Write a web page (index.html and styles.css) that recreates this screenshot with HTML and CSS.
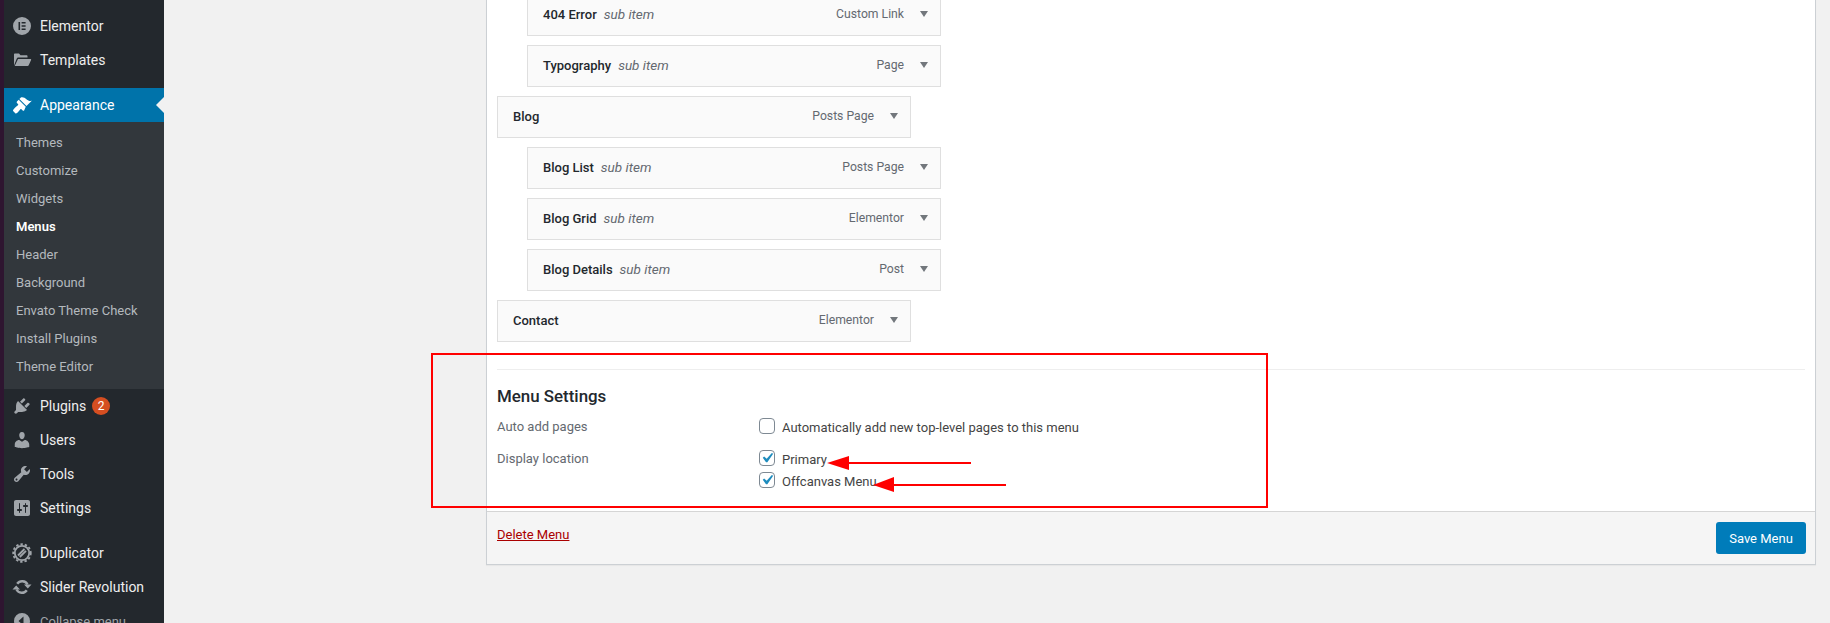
FILE: index.html
```html
<!DOCTYPE html>
<html lang="en">
<head>
<meta charset="utf-8">
<title>Menus</title>
<link rel="stylesheet" href="styles.css">
</head>
<body>
<div class="page">
  <nav class="sidebar">
    <ul class="nav-group">
      <li class="nav-item"><svg class="nav-icon" viewBox="0 0 20 20"><path fill-rule="evenodd" d="M10 1a9 9 0 1 1 0 18a9 9 0 0 1 0-18zM6.500 6v8h1.600V6zM9.600 6v1.600h4V6zM9.600 9.200v1.600h4V9.200zM9.600 12.400v1.600h4v-1.600z"/></svg><span>Elementor</span></li>
      <li class="nav-item"><svg class="nav-icon" viewBox="0 0 20 20"><path d="M2 15.500V4.500c0-.6.400-1 1-1h4l1.500 1.700h6c.6 0 1 .4 1 1v1.300H6.500c-.9 0-1.400.4-1.700 1.100zM6 9h12.500c.5 0 .8.400.6.900l-2.400 5.400c-.2.400-.6.700-1.100.7H2.700z"/></svg><span>Templates</span></li>
    </ul>
    <div class="nav-section">
      <div class="nav-item nav-current"><svg class="nav-icon" viewBox="0 0 20 20"><path d="M14.480 11.060L7.410 3.990l1.500-1.500c.5-.56 2.300-.47 3.510.32 1.210.8 1.430 1.280 2.910 2.100 1.180.64 2.450 1.260 4.450.85zm-.71.71L6.700 4.700 4.930 6.470c-.39.39-.39 1.020 0 1.410l1.060 1.060c.39.39.39 1.030 0 1.420-.6.6-1.430 1.110-2.210 1.690-.35.26-.7.53-1.010.84-1.340 1.340-2.050 2.500-1.640 3.090.6.860 1.700 1.700 2.400 2.400.6.400 1.900-.500 3-1.900.500-.600 1.100-1.500 1.700-2.100.36-.4 1.020-.39 1.420 0l1.060 1.060c.39.39 1.020.39 1.410 0z"/></svg><span>Appearance</span></div>
      <ul class="submenu">
        <li>Themes</li>
        <li>Customize</li>
        <li>Widgets</li>
        <li class="sub-current">Menus</li>
        <li>Header</li>
        <li>Background</li>
        <li>Envato Theme Check</li>
        <li>Install Plugins</li>
        <li>Theme Editor</li>
      </ul>
    </div>
    <ul class="nav-group">
      <li class="nav-item"><svg class="nav-icon" viewBox="0 0 20 20"><path d="M13.110 4.360L9.870 7.600 8 5.730l3.240-3.240c.35-.34 1.050-.2 1.560.32.52.51.66 1.210.31 1.550zm-8 1.770l.91-1.120 9.010 9.010-1.190.84c-.71.71-2.630 1.160-3.820 1.160H6.140L4.900 17.260c-.59.59-1.540.59-2.120 0-.59-.58-.59-1.530 0-2.120l1.240-1.240v-3.880c0-1.130.4-3.190 1.090-3.890zm7.260 3.970l3.240-3.240c.34-.35 1.040-.21 1.550.31.52.51.66 1.210.31 1.550l-3.240 3.250z"/></svg><span>Plugins</span><span class="badge">2</span></li>
      <li class="nav-item"><svg class="nav-icon" viewBox="0 0 20 20"><path d="M10 9.250c-2.270 0-2.730-3.440-2.730-3.440C7 4.020 7.820 2 9.970 2c2.160 0 2.980 2.020 2.710 3.810 0 0-.41 3.440-2.680 3.440zm0 2.570L12.720 10c2.390 0 4.520 2.330 4.520 4.530v2.490s-3.650 1.130-7.240 1.130c-3.650 0-7.240-1.130-7.240-1.130v-2.490c0-2.250 1.940-4.480 4.470-4.480z"/></svg><span>Users</span></li>
      <li class="nav-item"><svg class="nav-icon" viewBox="0 0 20 20"><path d="M16.680 9.770c-1.340 1.340-3.300 1.670-4.950.99l-5.410 6.520c-.99.99-2.590.99-3.580 0s-.99-2.590 0-3.570l6.520-5.420c-.68-1.650-.35-3.610.99-4.950 1.280-1.280 3.120-1.620 4.720-1.060l-2.890 2.890 2.820 2.820 2.860-2.870c.53 1.580.18 3.390-1.080 4.650zM3.810 16.210c.4.39 1.040.39 1.430 0 .4-.4.4-1.040 0-1.430-.39-.4-1.030-.4-1.430 0-.39.39-.39 1.030 0 1.430z"/></svg><span>Tools</span></li>
      <li class="nav-item"><svg class="nav-icon" viewBox="0 0 20 20"><path d="M18 16V4c0-1.100-.9-2-2-2H4c-1.100 0-2 .9-2 2v12c0 1.100.9 2 2 2h12c1.100 0 2-.9 2-2zM8 11h1c.55 0 1 .45 1 1s-.45 1-1 1H8v1.500c0 .28-.22.5-.5.5s-.5-.22-.5-.5V13H6c-.55 0-1-.45-1-1s.45-1 1-1h1V5.500c0-.28.22-.5.5-.5s.5.22.5.5V11zm5-2h-1c-.55 0-1-.45-1-1s.45-1 1-1h1V5.500c0-.28.22-.5.5-.5s.5.22.5.5V7h1c.55 0 1 .45 1 1s-.45 1-1 1h-1v5.500c0 .28-.22.5-.5.5s-.5-.22-.5-.5V9z"/></svg><span>Settings</span></li>
    </ul>
    <ul class="nav-group nav-gap">
      <li class="nav-item"><svg class="nav-icon" viewBox="0 0 20 20"><circle class="gear-ring" cx="10" cy="10" r="7.200"/><circle class="gear-teeth" cx="10" cy="10" r="8.800"/><path class="gear-hatch" d="M6 12.500L12.500 6M7.800 14L14 7.800"/></svg><span>Duplicator</span></li>
      <li class="nav-item"><svg class="nav-icon" viewBox="0 0 20 20"><path class="sync-arc" d="M5.200 6.800A6 6 0 0 1 15.500 7.500M14.800 13.200A6 6 0 0 1 4.500 12.500"/><path d="M12 7.400h7.500L15.800 11.400zM8 12.600H.5L4.200 8.600z"/></svg><span>Slider Revolution</span></li>
      <li class="nav-item nav-collapse"><svg class="nav-icon" viewBox="0 0 20 20"><path fill-rule="evenodd" d="M10 2a8 8 0 1 1 0 16a8 8 0 0 1 0-16zM11.500 5.500L6.500 10l5 4.500z"/></svg><span>Collapse menu</span></li>
    </ul>
  </nav>

  <main class="content">
    <section class="panel">
      <div class="panel-body">
        <ul class="menu-list">
          <li class="menu-item menu-child"><span class="item-title">404 Error</span><em class="item-sub">sub item</em><span class="item-type">Custom Link</span><span class="item-arrow"></span></li>
          <li class="menu-item menu-child"><span class="item-title">Typography</span><em class="item-sub">sub item</em><span class="item-type">Page</span><span class="item-arrow"></span></li>
          <li class="menu-item"><span class="item-title">Blog</span><span class="item-type">Posts Page</span><span class="item-arrow"></span></li>
          <li class="menu-item menu-child"><span class="item-title">Blog List</span><em class="item-sub">sub item</em><span class="item-type">Posts Page</span><span class="item-arrow"></span></li>
          <li class="menu-item menu-child"><span class="item-title">Blog Grid</span><em class="item-sub">sub item</em><span class="item-type">Elementor</span><span class="item-arrow"></span></li>
          <li class="menu-item menu-child"><span class="item-title">Blog Details</span><em class="item-sub">sub item</em><span class="item-type">Post</span><span class="item-arrow"></span></li>
          <li class="menu-item"><span class="item-title">Contact</span><span class="item-type">Elementor</span><span class="item-arrow"></span></li>
        </ul>
        <div class="settings">
          <h3 class="settings-title">Menu Settings</h3>
          <div class="settings-row">
            <div class="settings-label">Auto add pages</div>
            <div class="settings-options">
              <label class="option"><span class="check"></span>Automatically add new top-level pages to this menu</label>
            </div>
          </div>
          <div class="settings-row settings-row-locations">
            <div class="settings-label">Display location</div>
            <div class="settings-options">
              <label class="option"><span class="check"><svg viewBox="0 0 20 20"><path d="M14.830 4.890l1.340.94-5.810 8.380H9.020L5.780 9.670l1.340-1.250 2.570 2.400z"/></svg></span>Primary</label>
              <label class="option"><span class="check"><svg viewBox="0 0 20 20"><path d="M14.830 4.890l1.340.94-5.810 8.380H9.020L5.780 9.670l1.340-1.250 2.570 2.400z"/></svg></span>Offcanvas Menu</label>
            </div>
          </div>
        </div>
      </div>
      <footer class="panel-footer">
        <a class="delete-link">Delete Menu</a>
        <button class="save-button">Save Menu</button>
      </footer>
    </section>
  </main>
</div>
<div class="annot-box"></div>
<svg class="annot-arrows" viewBox="0 0 1830 623">
  <path d="M971 462h-122v-6l-22 7 22 7v-6h122z"/>
  <path d="M1006 484h-112v-7l-21 8 21 7v-6h112z"/>
</svg>
</body>
</html>
```
FILE: styles.css
```css
* { box-sizing: border-box; }
html, body { margin: 0; padding: 0; height: 623px; overflow: hidden; }
body { background: #f1f1f1; font-family: Roboto, "Liberation Sans", sans-serif; font-size: 13px; color: #444; position: relative; }
ul { list-style: none; margin: 0; padding: 0; }

.page { display: flex; height: 623px; overflow: hidden; }

.sidebar { flex: 0 0 164px; background: #23282d; border-left: 4px solid #2e1530; padding-top: 9px; color: #eee; font-size: 14px; overflow: hidden; }
.nav-section { margin-top: 11px; position: relative; }
.nav-gap { margin-top: 11px; }
.nav-item { display: flex; align-items: center; height: 34px; padding-left: 8px; color: #eee; }
.nav-icon { flex: none; width: 20px; height: 20px; margin-right: 8px; fill: #a0a5aa; }
.nav-current { background: #0073aa; color: #fff; position: relative; }
.nav-current .nav-icon { fill: #fff; }
.nav-current::after { content: ""; position: absolute; right: 0; top: 9px; border: 8px solid transparent; border-left-width: 0; border-right-color: #f1f1f1; }
.nav-collapse { color: #a0a5aa; font-size: 13px; }
.gear-ring { fill: none; stroke: #a0a5aa; stroke-width: 1.800; }
.gear-teeth { fill: none; stroke: #a0a5aa; stroke-width: 1.800; stroke-dasharray: 2.400 2; }
.gear-hatch { fill: none; stroke: #a0a5aa; stroke-width: 1.800; }
.sync-arc { fill: none; stroke: #a0a5aa; stroke-width: 2.400; }
.badge { display: inline-flex; align-items: center; justify-content: center; width: 18px; height: 18px; margin-left: 6px; border-radius: 50%; background: #d54e21; color: #fff; font-size: 12px; }

.submenu { background: #32373c; padding: 7px 0 8px; font-size: 13px; color: #b4b9be; }
.submenu li { height: 28px; line-height: 28px; padding-left: 12px; }
.submenu .sub-current { color: #fff; font-weight: 600; }

.content { flex: 1; min-width: 0; padding: 0 14px 0 322px; }
.panel { margin-top: -1px; height: 566px; display: flex; flex-direction: column; border: 1px solid #ccd0d4; background: #fff; box-shadow: 0 1px 1px rgba(0,0,0,.04); }
.panel-body { flex: 1; padding: 0 10px; min-height: 0; }

.menu-list { margin-top: -6px; }
.menu-item { display: flex; align-items: center; width: 414px; height: 42px; margin-bottom: 9px; padding: 0 12px 2px 15px; border: 1px solid #dfdfdf; background: #fafafa; }
.menu-child { margin-left: 30px; }
.item-title { color: #23282d; font-weight: 500; }
.item-sub { margin-left: 7px; color: #646970; font-style: italic; font-size: 13.500px; }
.item-type { margin-left: auto; color: #646970; font-size: 12.200px; }
.item-arrow { flex: none; width: 0; height: 0; margin-left: 16px; border-style: solid; border-width: 6px 4px 0; border-color: #72777c transparent transparent; }

.settings { margin-top: 27px; border-top: 1px solid #eee; padding-top: 15px; }
.settings-title { margin: 0; height: 22px; line-height: 22px; font-size: 16.900px; font-weight: 500; color: #23282d; }
.settings-row { display: flex; margin-top: 11px; }
.settings-row-locations { margin-top: 14px; }
.settings-label { flex: 0 0 262px; color: #646970; line-height: 18px; }
.settings-options { display: flex; flex-direction: column; gap: 4px; }
.option { display: flex; align-items: center; height: 18px; color: #444; }
.check { flex: none; display: block; width: 16px; height: 16px; margin: -2px 7px 0 0; border: 1px solid #7e8993; border-radius: 4px; background: #fff; overflow: hidden; }
.check svg { display: block; width: 20px; height: 20px; margin: -3px; fill: #1e8cbe; }

.panel-footer { flex: none; display: flex; align-items: center; justify-content: space-between; height: 53px; padding: 0 9px 8px 10px; border-top: 1px solid #d5d5d5; background: #f5f5f5; }
.delete-link { color: #a00; text-decoration: underline; }
.save-button { width: 90px; height: 32px; margin-top: 8px; border: 0; border-radius: 3px; background: #007cba; color: #fff; font: 13px Roboto, sans-serif; }

.annot-box { position: absolute; left: 431px; top: 353px; width: 837px; height: 155px; border: 2px solid #f00; }
.annot-arrows { position: absolute; left: 0; top: 0; width: 1830px; height: 623px; fill: #f00; pointer-events: none; }
```
